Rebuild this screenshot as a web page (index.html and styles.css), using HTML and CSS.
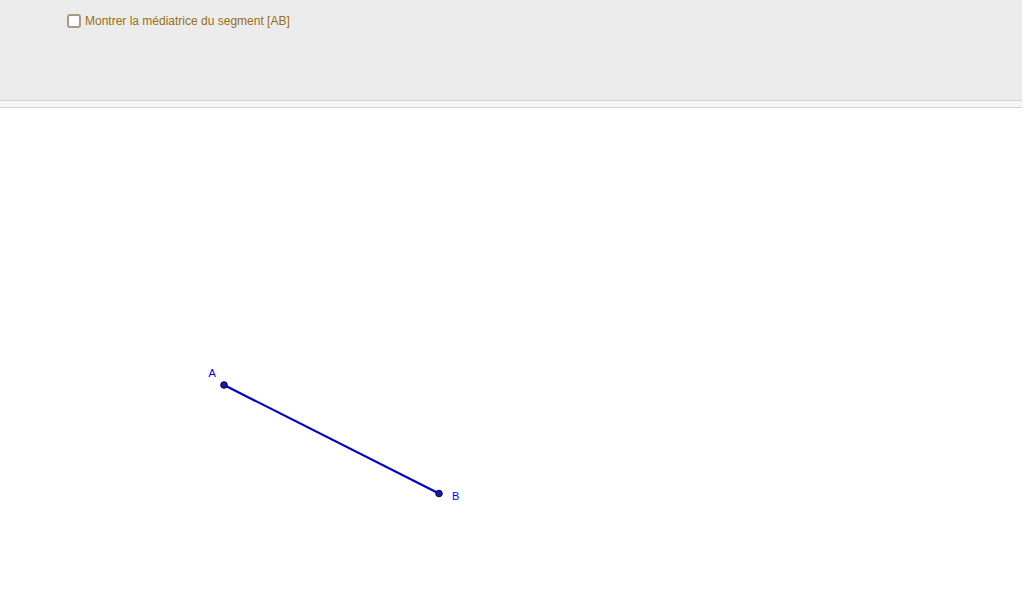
FILE: index.html
```html
<!DOCTYPE html>
<html lang="fr">
<head>
<meta charset="utf-8">
<title>Médiatrice</title>
<link rel="stylesheet" href="styles.css">
</head>
<body>
<div class="app">
  <div class="panel">
    <label class="check">
      <span class="box"></span>
      <span class="label">Montrer la médiatrice du segment [AB]</span>
    </label>
  </div>
  <div class="strip"></div>
  <div class="canvas">
    <svg class="graph" width="1022" height="498" viewBox="0 0 1022 498">
      <line x1="224" y1="277" x2="439" y2="385.5" stroke="#0000cc" stroke-width="2.2"/>
      <circle cx="224" cy="277" r="3.3" fill="#1a1aa8" stroke="#000050" stroke-width="1"/>
      <circle cx="439" cy="385.5" r="3.3" fill="#1a1aa8" stroke="#000050" stroke-width="1"/>
      <text x="208.5" y="269" class="pt">A</text>
      <text x="452" y="392" class="pt">B</text>
    </svg>
  </div>
</div>
</body>
</html>
```
FILE: styles.css
```css
html, body {
  margin: 0;
  padding: 0;
  background: #ffffff;
}
.app {
  width: 1022px;
  font-family: "Liberation Sans", Arial, sans-serif;
}
.panel {
  height: 86px;
  background: #ececec;
  border-bottom: 1px solid #d4d4d4;
  padding: 14px 0 0 67px;
}
.check {
  display: flex;
  align-items: center;
  gap: 4px;
}
.box {
  width: 14px;
  height: 14px;
  box-sizing: border-box;
  border: 2px solid #a89a80;
  border-radius: 3px;
  background: #ffffff;
}
.label {
  font-size: 12px;
  color: #9a6e14;
  line-height: 14px;
}
.strip {
  height: 6px;
  background: #f6f6f6;
  border-bottom: 1px solid #d4d4d4;
}
.canvas {
  background: #ffffff;
}
.graph {
  display: block;
}
.pt {
  font-family: "Liberation Sans", Arial, sans-serif;
  font-size: 11px;
  fill: #0000e6;
}
```
